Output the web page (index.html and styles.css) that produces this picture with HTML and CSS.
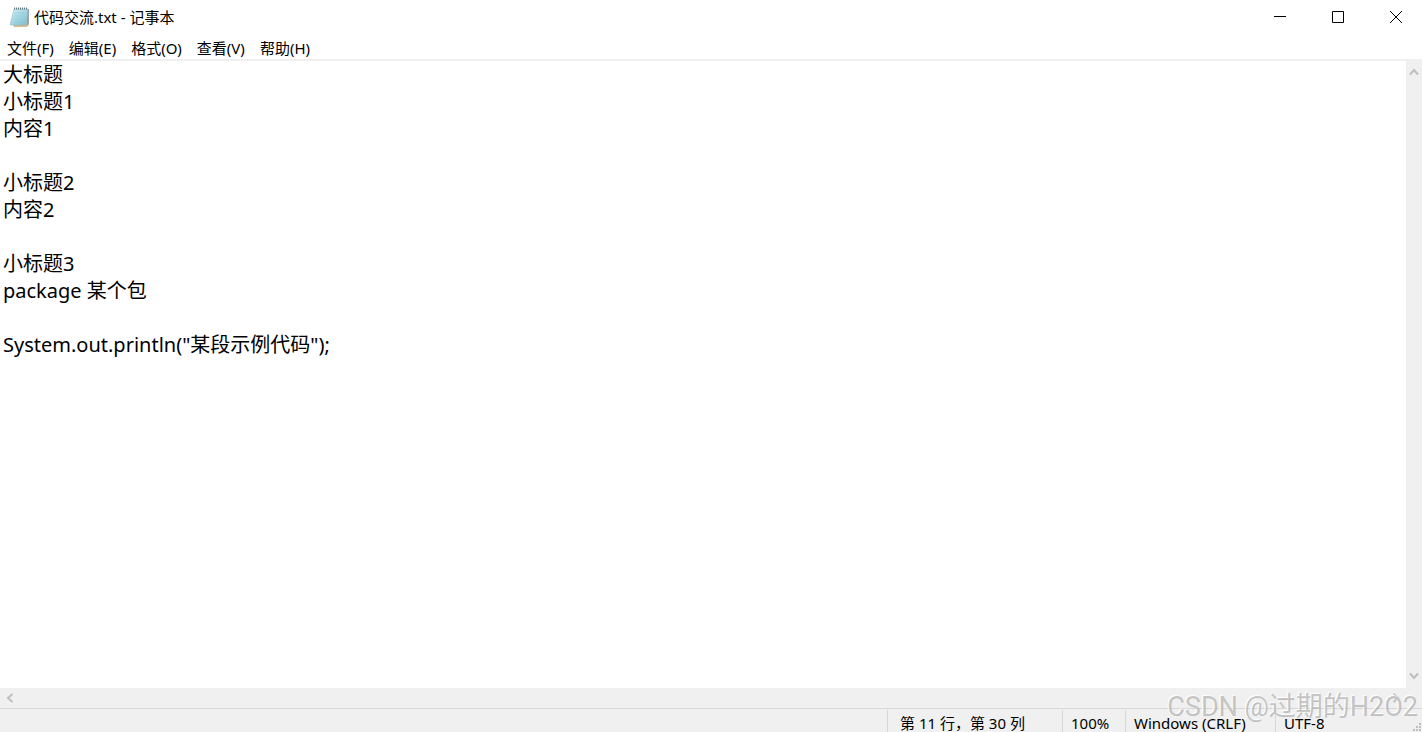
FILE: index.html
```
<!DOCTYPE html>
<html lang="zh-CN">
<head>
  <meta charset="UTF-8">
  <meta name="viewport" content="width=device-width, initial-scale=1.0">
  <title>代码交流.txt - 记事本</title>
  <link rel="stylesheet" href="styles.css">
</head>
<body>
  <!-- Title bar -->
  <header class="title-bar">
    <svg class="app-icon" width="20" height="20" viewBox="0 0 20 20" aria-hidden="true">
      <defs>
        <linearGradient id="paper" x1="0" y1="0" x2="1" y2="1">
          <stop offset="0" stop-color="#d6f2f6"/>
          <stop offset="1" stop-color="#78bccd"/>
        </linearGradient>
      </defs>
      <path d="M16 3l3 1v14l-2 2H4l-1-2h12z" fill="#d3bd92"/>
      <path d="M17 2h2v14l-2 3z" fill="#9aa6a6"/>
      <path d="M4 2h14l-2 16H0z" fill="url(#paper)" stroke="#88bac5" stroke-width=".6"/>
      <path d="M4 6h11M3.700 9h11M3.300 12h11M3 15h11" stroke="#8fcbd8" stroke-width=".7"/>
      <path d="M4 1.500h14" stroke="#667880" stroke-width="2" stroke-dasharray="1 1"/>
    </svg>
    <h1 class="title">代码交流.txt - 记事本</h1>
    <div class="window-buttons">
      <button type="button" aria-label="最小化">
        <svg width="12" height="12" viewBox="0 0 12 12"><path d="M0 5.500h12"/></svg>
      </button>
      <button type="button" aria-label="最大化">
        <svg width="12" height="12" viewBox="0 0 12 12"><path d="M.5.5h11v11H.5z"/></svg>
      </button>
      <button type="button" aria-label="关闭">
        <svg width="12" height="12" viewBox="0 0 12 12"><path d="M0 0l12 12M12 0L0 12"/></svg>
      </button>
    </div>
  </header>

  <!-- Menu -->
  <nav class="menu-bar">
    <button type="button">文件(F)</button>
    <button type="button">编辑(E)</button>
    <button type="button">格式(O)</button>
    <button type="button">查看(V)</button>
    <button type="button">帮助(H)</button>
  </nav>

  <!-- Editor -->
  <main class="editor">
    <textarea class="editor-text" aria-label="文本编辑器" wrap="off" spellcheck="false">大标题
小标题1
内容1

小标题2
内容2

小标题3
package 某个包

System.out.println("某段示例代码");</textarea>
    <div class="scroll-vertical">
      <button type="button" aria-label="向上滚动">
        <svg width="10" height="8" viewBox="0 0 10 8"><path d="M1 6.500l4-4.500 4 4.500"/></svg>
      </button>
      <button type="button" aria-label="向下滚动">
        <svg width="10" height="8" viewBox="0 0 10 8"><path d="M1 1.500l4 4.500 4-4.500"/></svg>
      </button>
    </div>
  </main>
  <div class="scroll-horizontal">
    <button type="button" aria-label="向左滚动">
      <svg width="8" height="10" viewBox="0 0 8 10"><path d="M6.500 1L2 5l4.500 4"/></svg>
    </button>
    <button type="button" aria-label="向右滚动">
      <svg width="8" height="10" viewBox="0 0 8 10"><path d="M1.500 1L6 5 1.500 9"/></svg>
    </button>
  </div>

  <!-- Status bar -->
  <footer class="status-bar">
    <div class="status-cell position">第 11 行，第 30 列</div>
    <div class="status-cell zoom">100%</div>
    <div class="status-cell line-ending">Windows (CRLF)</div>
    <div class="status-cell encoding">UTF-8</div>
    <svg class="grip" width="9" height="9" viewBox="0 0 9 9" aria-hidden="true">
      <path d="M6 0h2v2H6zM3 3h2v2H3zM6 3h2v2H6zM0 6h2v2H0zM3 6h2v2H3zM6 6h2v2H6z" fill="#bfbfbf"/>
    </svg>
  </footer>

  <div class="watermark">CSDN @过期的H2O2</div>
</body>
</html>
```
FILE: styles.css
```
* {
  box-sizing: border-box;
}

body {
  display: flex;
  flex-direction: column;
  height: 100vh;
  margin: 0;
  overflow: hidden;
  background: #fff;
  color: #000;
  font-family: "Noto Sans", "Noto Sans CJK SC", sans-serif;
  font-size: 15px;
}

button {
  padding: 0;
  border: none;
  background: none;
  color: inherit;
  font: inherit;
}

/* Title bar */
.title-bar {
  display: flex;
  flex: none;
  align-items: center;
  height: 34px;
  padding: 0 3px 0 10px;
}

.title {
  flex: 1;
  margin: 0 0 0 4px;
  font-size: 15px;
  font-weight: normal;
  line-height: 20px;
}

.window-buttons {
  display: flex;
  gap: 12px;
}

.window-buttons button {
  display: flex;
  align-items: center;
  justify-content: center;
  width: 46px;
  height: 34px;
}

.window-buttons button:hover {
  background: #e5e5e5;
}

.window-buttons svg {
  fill: none;
  stroke: #000;
  stroke-width: 1;
}

/* Menu */
.menu-bar {
  display: flex;
  flex: none;
  height: 27px;
  border-bottom: 2px solid #f0f0f0;
}

.menu-bar button {
  padding: 2px 8px 0 7px;
  line-height: 20px;
}

.menu-bar button:hover {
  background: #e5f3ff;
}

/* Editor */
.editor {
  display: flex;
  flex: 1;
  min-height: 0;
}

.editor-text {
  flex: 1;
  padding: 0 3px;
  border: none;
  outline: none;
  resize: none;
  overflow: hidden;
  background: #fff;
  color: #000;
  font-family: inherit;
  font-size: 20px;
  line-height: 27px;
}

.scroll-vertical,
.scroll-horizontal {
  display: flex;
  flex: none;
  justify-content: space-between;
  background: #f0f0f0;
}

.scroll-vertical {
  flex-direction: column;
  width: 16px;
  padding: 1px 0 2px;
}

.scroll-horizontal {
  height: 20px;
  padding-right: 16px;
}

.scroll-vertical button,
.scroll-horizontal button {
  display: flex;
  align-items: center;
  justify-content: center;
  height: 20px;
}

.scroll-vertical button {
  width: 16px;
}

.scroll-horizontal button {
  width: 20px;
}

.scroll-vertical svg,
.scroll-horizontal svg {
  fill: none;
  stroke: #bfbfbf;
  stroke-width: 2;
}

/* Status bar */
.status-bar {
  position: relative;
  display: flex;
  flex: none;
  justify-content: flex-end;
  height: 24px;
  padding-top: 1px;
  border-top: 1px solid #d7d7d7;
  background: #f0f0f0;
}

.status-cell {
  padding: 3px 0 0 8px;
  border-left: 1px solid #d7d7d7;
  line-height: 20px;
  white-space: nowrap;
}

.position {
  width: 175px;
  padding-left: 12px;
}

.zoom {
  width: 63px;
}

.line-ending {
  width: 150px;
}

.encoding {
  width: 147px;
}

.grip {
  position: absolute;
  right: 0;
  bottom: 0;
}

.watermark {
  position: absolute;
  right: 4px;
  bottom: 7px;
  color: rgba(160, 160, 160, 0.6);
  font-family: Roboto, "Noto Sans CJK SC", sans-serif;
  font-size: 27px;
  line-height: 36px;
  text-shadow: -1px -1px 1px #fff;
  pointer-events: none;
}
```
